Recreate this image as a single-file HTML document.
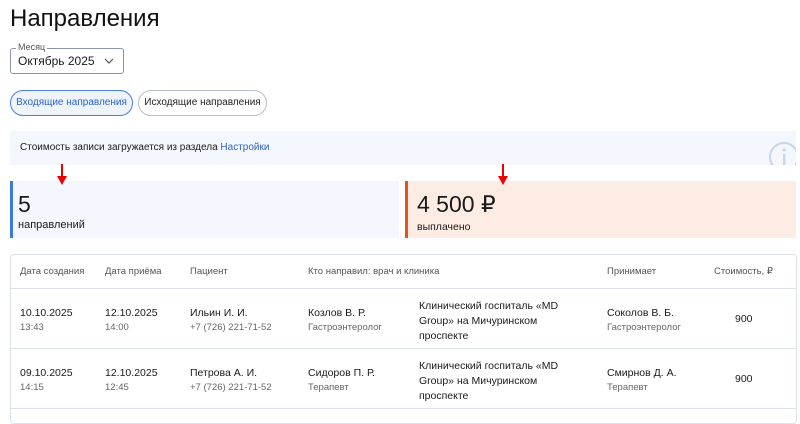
<!DOCTYPE html>
<html><head><meta charset="utf-8"><style>
*{box-sizing:border-box;margin:0;padding:0}
body{width:800px;height:412px;overflow:hidden;background:#fff;font-family:"Liberation Sans",sans-serif;color:#1a1a1a;position:relative}
.a{position:absolute}
h1{position:absolute;left:10px;top:5px;font-size:24px;font-weight:400;color:#111}
.sel{left:10px;top:48px;width:114px;height:26px;border:1px solid #8a96a8;border-radius:3px}
.sel .lab{position:absolute;left:5px;top:-7px;background:#fff;font-size:9px;color:#555;padding:0 2px}
.sel .v{position:absolute;left:7px;top:5px;font-size:12px}
.pill{top:90px;height:26px;border-radius:13px;font-size:10px;line-height:24px;text-align:center;white-space:nowrap}
.info{left:10px;top:131px;width:786px;height:34px;background:#f4f7fd;font-size:10px;line-height:34px;padding-left:10px;overflow:hidden;white-space:nowrap}
.stat{top:181px;height:57px}
.tbl{left:10px;top:254px;width:787px;height:170px;border:1px solid #dde2ea;border-radius:4px}
.t{position:absolute;font-size:10.5px;line-height:14px;white-space:nowrap}
.s{font-size:9.5px;color:#666}
.h{font-size:9.5px;color:#555}
.hl{position:absolute;left:10px;width:787px;height:1px;background:#dde2ea}
</style></head><body>
<h1>Направления</h1>
<div class="a sel"><span class="lab">Месяц</span><span class="v">Октябрь 2025</span>
<svg class="a" style="left:93px;top:9px" width="10" height="6" viewBox="0 0 10 6"><path d="M1 1l4 4 4-4" fill="none" stroke="#555" stroke-width="1.2"/></svg></div>
<div class="a pill" style="left:10px;width:123px;border:1px solid #4a7fd8;background:#eef3fc;color:#2d63c8">Входящие направления</div>
<div class="a pill" style="left:138px;width:129px;border:1px solid #b8c0cc;color:#222">Исходящие направления</div>
<div class="a info">Стоимость записи загружается из раздела <span style="color:#2d63c8">Настройки</span>
<svg class="a" style="left:754px;top:6px" width="32" height="28"><circle cx="20" cy="20" r="14" fill="none" stroke="#c6d5ef" stroke-width="2"/><rect x="19" y="17" width="2.4" height="11" fill="#c6d5ef"/><circle cx="20.2" cy="13" r="1.6" fill="#c6d5ef"/></svg></div>
<div class="a stat" style="left:10px;width:389px;background:#f4f7fd;border-left:3px solid #3b7be0">
<div class="t" style="left:5px;top:10px;font-size:23px;line-height:26px">5</div>
<div class="t" style="left:5px;top:37px;font-size:11px">направлений</div></div>
<div class="a stat" style="left:405px;width:391px;background:#fdece4;border-left:3px solid #e0561c">
<div class="t" style="left:9px;top:10px;font-size:23px;line-height:26px">4 500 ₽</div>
<div class="t" style="left:9px;top:39px;font-size:10.5px">выплачено</div></div>
<svg class="a" style="left:55px;top:164px" width="14" height="26"><path d="M7 0v14" stroke="#e00" stroke-width="2"/><path d="M2 12h10l-5 9z" fill="#e00"/></svg>
<svg class="a" style="left:496px;top:164px" width="14" height="26"><path d="M7 0v14" stroke="#e00" stroke-width="2"/><path d="M2 12h10l-5 9z" fill="#e00"/></svg>
<div class="a tbl"></div>
<div class="hl" style="top:288px"></div>
<div class="hl" style="top:348px"></div>
<div class="hl" style="top:408px"></div>
<div class="t h" style="left:20px;top:265px">Дата создания</div>
<div class="t h" style="left:105px;top:265px">Дата приёма</div>
<div class="t h" style="left:190px;top:265px">Пациент</div>
<div class="t h" style="left:308px;top:265px">Кто направил: врач и клиника</div>
<div class="t h" style="left:607px;top:265px">Принимает</div>
<div class="t h" style="left:714px;top:265px">Стоимость, ₽</div>

<div class="t" style="left:20px;top:306px">10.10.2025<br><span class="s">13:43</span></div>
<div class="t" style="left:105px;top:306px">12.10.2025<br><span class="s">14:00</span></div>
<div class="t" style="left:190px;top:306px">Ильин И. И.<br><span class="s">+7 (726) 221-71-52</span></div>
<div class="t" style="left:308px;top:306px">Козлов В. Р.<br><span class="s">Гастроэнтеролог</span></div>
<div class="t" style="left:419px;top:299px;line-height:15px">Клинический госпиталь «MD<br>Group» на Мичуринском<br>проспекте</div>
<div class="t" style="left:607px;top:306px">Соколов В. Б.<br><span class="s">Гастроэнтеролог</span></div>
<div class="t" style="left:735px;top:312px">900</div>

<div class="t" style="left:20px;top:366px">09.10.2025<br><span class="s">14:15</span></div>
<div class="t" style="left:105px;top:366px">12.10.2025<br><span class="s">12:45</span></div>
<div class="t" style="left:190px;top:366px">Петрова А. И.<br><span class="s">+7 (726) 221-71-52</span></div>
<div class="t" style="left:308px;top:366px">Сидоров П. Р.<br><span class="s">Терапевт</span></div>
<div class="t" style="left:419px;top:359px;line-height:15px">Клинический госпиталь «MD<br>Group» на Мичуринском<br>проспекте</div>
<div class="t" style="left:607px;top:366px">Смирнов Д. А.<br><span class="s">Терапевт</span></div>
<div class="t" style="left:735px;top:372px">900</div>
</body></html>
